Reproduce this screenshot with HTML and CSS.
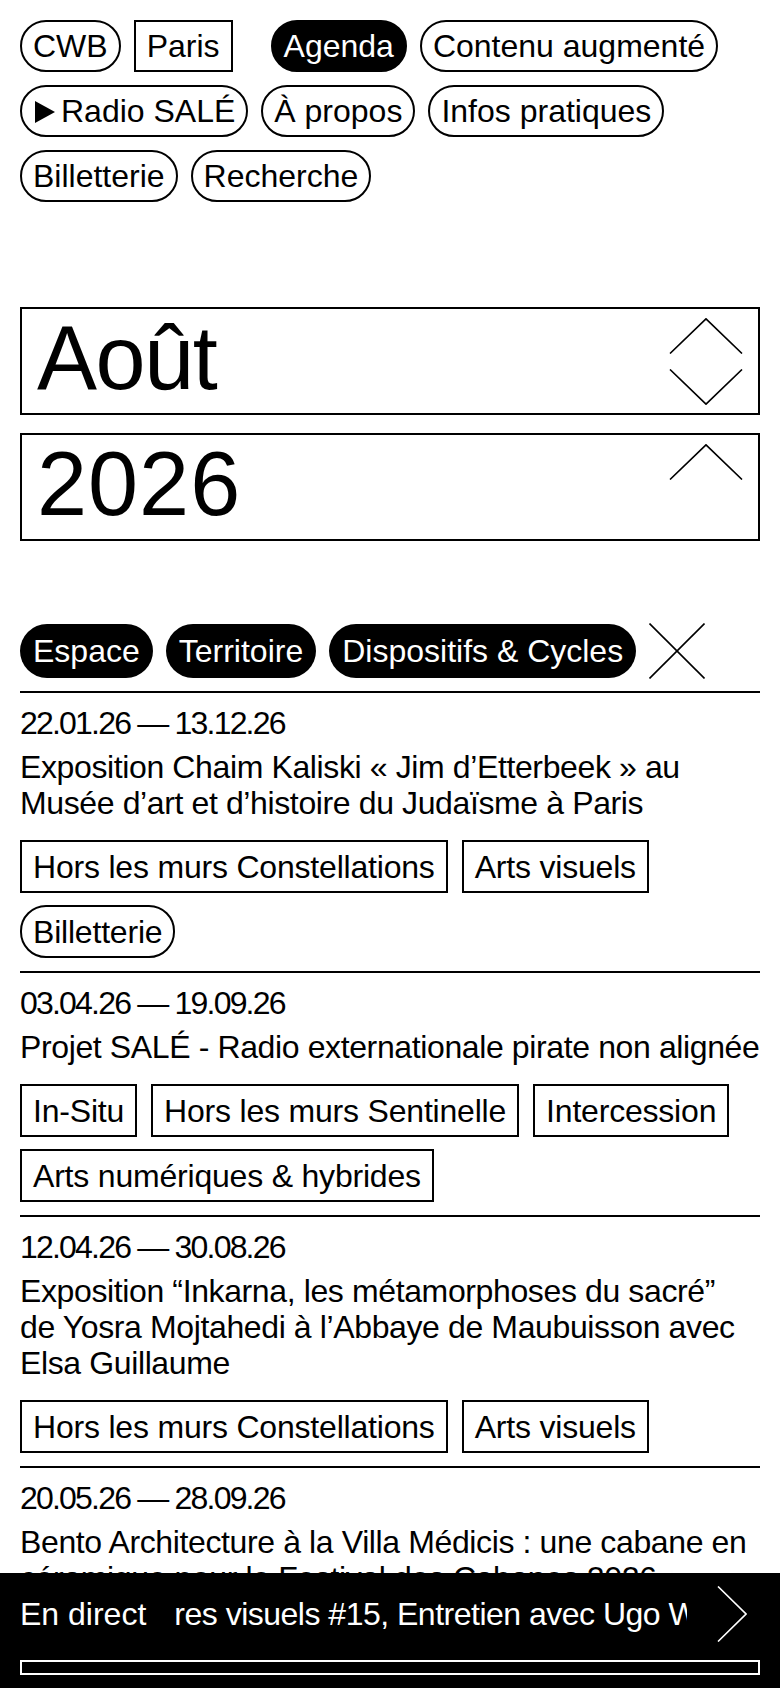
FILE: index.html
```html
<!DOCTYPE html>
<html lang="fr">
<head>
    <meta charset="UTF-8">
    <title>Agenda</title>
    <link rel="stylesheet" href="styles.css">
</head>
<body>
    <nav class="menu">
        <a class="pill" href="#">CWB</a>
        <a class="box site" href="#">Paris</a>
        <a class="pill active" href="#">Agenda</a>
        <a class="pill" href="#">Contenu augmenté</a>
        <a class="pill" href="#">
            <svg class="play" width="20" height="22" viewBox="0 0 20 22"><polygon points="0,0 20,11 0,22"/></svg>
            Radio SALÉ
        </a>
        <a class="pill" href="#">À propos</a>
        <a class="pill" href="#">Infos pratiques</a>
        <a class="pill" href="#">Billetterie</a>
        <a class="pill" href="#">Recherche</a>
    </nav>

    <div class="picker">
        <div class="picker-field">
            <span class="picker-value">Août</span>
            <span class="picker-arrows">
                <svg width="74" height="36" viewBox="0 0 74 36"><polyline points="1,35.5 37,0.8 73,35.5"/></svg>
                <svg width="74" height="36" viewBox="0 0 74 36"><polyline points="1,0.5 37,35.2 73,0.5"/></svg>
            </span>
        </div>
        <div class="picker-field">
            <span class="picker-value year">2026</span>
            <span class="picker-arrows">
                <svg width="74" height="36" viewBox="0 0 74 36"><polyline points="1,35.5 37,0.8 73,35.5"/></svg>
            </span>
        </div>
    </div>

    <div class="filters">
        <button class="filter">Espace</button>
        <button class="filter">Territoire</button>
        <button class="filter">Dispositifs &amp; Cycles</button>
        <button class="filter-clear">
            <svg width="56" height="56" viewBox="0 0 56 56"><line x1="0.5" y1="0.5" x2="55.5" y2="55.5"/><line x1="55.5" y1="0.5" x2="0.5" y2="55.5"/></svg>
        </button>
    </div>

    <ul class="events">
        <li class="event">
            <div class="event-date">22.01.26 — 13.12.26</div>
            <div class="event-title">Exposition Chaim Kaliski « Jim d’Etterbeek » au Musée d’art et d’histoire du Judaïsme à Paris</div>
            <div class="event-tags">
                <a class="box" href="#">Hors les murs Constellations</a>
                <a class="box" href="#">Arts visuels</a>
                <a class="pill" href="#">Billetterie</a>
            </div>
        </li>
        <li class="event">
            <div class="event-date">03.04.26 — 19.09.26</div>
            <div class="event-title">Projet SALÉ - Radio externationale pirate non alignée</div>
            <div class="event-tags">
                <a class="box" href="#">In-Situ</a>
                <a class="box" href="#">Hors les murs Sentinelle</a>
                <a class="box" href="#">Intercession</a>
                <a class="box" href="#">Arts numériques &amp; hybrides</a>
            </div>
        </li>
        <li class="event">
            <div class="event-date">12.04.26 — 30.08.26</div>
            <div class="event-title">Exposition “Inkarna, les métamorphoses du sacré”<br>de Yosra Mojtahedi à l’Abbaye de Maubuisson avec Elsa Guillaume</div>
            <div class="event-tags">
                <a class="box" href="#">Hors les murs Constellations</a>
                <a class="box" href="#">Arts visuels</a>
            </div>
        </li>
        <li class="event">
            <div class="event-date">20.05.26 — 28.09.26</div>
            <div class="event-title">Bento Architecture à la Villa Médicis : une cabane en céramique pour le Festival des Cabanes 2026</div>
            <div class="event-tags">
                <a class="box" href="#">Hors les murs Constellations</a>
                <a class="box" href="#">Architecture</a>
            </div>
        </li>
    </ul>

    <footer class="player">
        <div class="player-row">
            <span class="player-label">En direct</span>
            <div class="player-ticker">
                <span>res visuels #15, Entretien avec Ugo Woodruff</span>
            </div>
            <svg class="player-next" width="30" height="56" viewBox="0 0 30 56"><polyline points="1,0.5 29,28 1,55.5"/></svg>
        </div>
        <div class="player-progress"></div>
    </footer>
</body>
</html>
```

FILE: styles.css
```css
body {
    margin: 0;
    padding: 20px;
    height: 100vh;
    box-sizing: border-box;
    overflow: hidden;
    font-family: "Liberation Sans", Arial, sans-serif;
    font-size: 32px;
    line-height: 36px;
    letter-spacing: 0;
    color: #000;
    background-color: #fff;
}

a {
    color: inherit;
    text-decoration: none;
}

svg {
    display: block;
    fill: none;
    stroke: #000;
    stroke-width: 1.6;
}

/* menu du haut */

.menu {
    display: flex;
    flex-wrap: wrap;
    gap: 13px;
}

.pill,
.box {
    display: inline-flex;
    align-items: center;
    height: 52px;
    box-sizing: border-box;
    padding: 0 11px;
    border: 2px solid #000;
    white-space: nowrap;
}

.pill {
    border-radius: 26px;
}

.active {
    background-color: #000;
    color: #fff;
}

.site {
    margin-right: 25px;
}

.play {
    fill: #000;
    stroke: none;
    margin: 2px 6px 0 2px;
}

/* choix du mois */

.picker {
    margin-top: 105px;
    display: flex;
    flex-direction: column;
    gap: 18px;
}

.picker-field {
    display: flex;
    justify-content: space-between;
    align-items: flex-start;
    height: 108px;
    box-sizing: border-box;
    padding: 4px 15px 10px 15px;
    border: 2px solid #000;
}

.picker-value {
    font-size: 90px;
    line-height: 90px;
    letter-spacing: -1.5px;
}

.picker-value.year {
    letter-spacing: 1px;
}

.picker-arrows {
    display: flex;
    flex-direction: column;
    gap: 15px;
    margin-top: 5px;
}

/* filtres */

.filters {
    display: flex;
    flex-wrap: wrap;
    align-items: center;
    gap: 13px;
    margin-top: 82px;
    margin-bottom: 12px;
}

.filter {
    height: 54px;
    padding: 0 13px;
    border: none;
    border-radius: 27px;
    background-color: #000;
    color: #fff;
    font: inherit;
    letter-spacing: inherit;
    cursor: pointer;
}

.filter-clear {
    padding: 0;
    border: none;
    background: none;
    cursor: pointer;
}

/* liste */

.events {
    list-style: none;
    margin: 0;
    padding: 0;
}

.event {
    border-top: 2px solid #000;
    padding: 12px 0 13px;
}

.event-date {
    letter-spacing: -1.8px;
}

.event-title {
    margin-top: 8px;
    letter-spacing: -0.38px;
}

.event-tags {
    display: flex;
    flex-wrap: wrap;
    gap: 12px 14px;
    margin-top: 19px;
    letter-spacing: -0.2px;
}

.event-tags .box,
.event-tags .pill {
    height: 53px;
}

/* lecteur radio */

.player {
    position: fixed;
    left: 0;
    right: 0;
    bottom: 0;
    height: 115px;
    box-sizing: border-box;
    padding: 13px 20px 0;
    background-color: #000;
    color: #fff;
}

.player-row {
    display: flex;
    align-items: center;
    height: 56px;
}

.player-label {
    margin-right: 28px;
    white-space: nowrap;
}

.player-ticker {
    flex: 1;
    overflow: hidden;
    white-space: nowrap;
    margin-right: 30px;
    letter-spacing: -0.5px;
}

.player-next {
    stroke: #fff;
    margin-right: 13px;
}

.player-progress {
    margin-top: 18px;
    height: 15px;
    box-sizing: border-box;
    border: 2px solid #fff;
}
```
